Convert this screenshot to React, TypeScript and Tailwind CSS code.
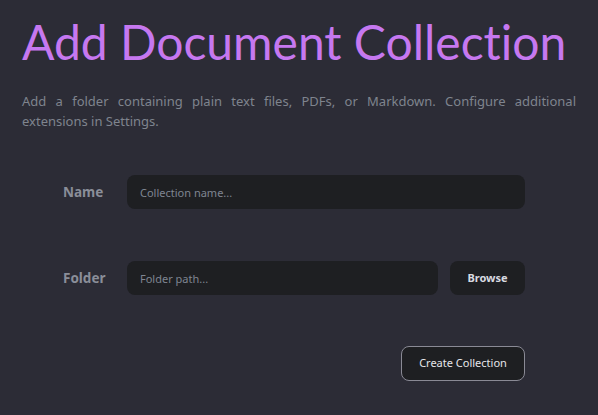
import React from "react";

export default function App() {
  return (
    <div
      className="w-[598px] h-[415px] bg-[#2c2c36] px-[22px] pt-[10px] overflow-hidden"
      style={{ fontFamily: '"Noto Sans", "Open Sans", sans-serif' }}
    >
      <h1
        className="text-[48px] leading-[64px] text-[#c678f0] font-normal whitespace-nowrap [font-variant-ligatures:none]"
        style={{ fontFamily: 'Lato, "Noto Sans", sans-serif' }}
      >
        Add Document Collection
      </h1>
      <p className="mt-[17px] text-[13px] leading-[20px] text-[#7f848e] text-justify">
        Add a folder containing plain text files, PDFs, or Markdown. Configure additional extensions in Settings.
      </p>
      <div className="ml-[41px] mr-[51px] mt-[44px] flex flex-col">
        <div className="flex items-center h-[34px]">
          <label className="w-[64px] text-[13.5px] font-bold text-[#8a8e99]">Name</label>
          <input
            placeholder="Collection name..."
            className="flex-1 h-[34px] rounded-[8px] bg-[#1e1f22] px-[13px] text-[11px] text-[#c8c8d0] placeholder:text-[#7f8591] outline-none"
          />
        </div>
        <div className="flex items-center h-[34px] mt-[52px]">
          <label className="w-[64px] text-[13.5px] font-bold text-[#8a8e99]">Folder</label>
          <input
            placeholder="Folder path..."
            className="flex-1 h-[34px] rounded-[8px] bg-[#1e1f22] px-[13px] text-[11px] text-[#c8c8d0] placeholder:text-[#7f8591] outline-none"
          />
          <button className="ml-[12px] w-[75px] h-[34px] rounded-[8px] bg-[#1e1f22] text-[11px] font-bold text-[#d8dae0]">
            Browse
          </button>
        </div>
        <div className="flex justify-end mt-[51px]">
          <button className="h-[35px] w-[124px] rounded-[8px] border border-[#8a8a95] bg-[#1e1f22] text-[11px] text-[#e6e6ea]">
            Create Collection
          </button>
        </div>
      </div>
    </div>
  );
}
